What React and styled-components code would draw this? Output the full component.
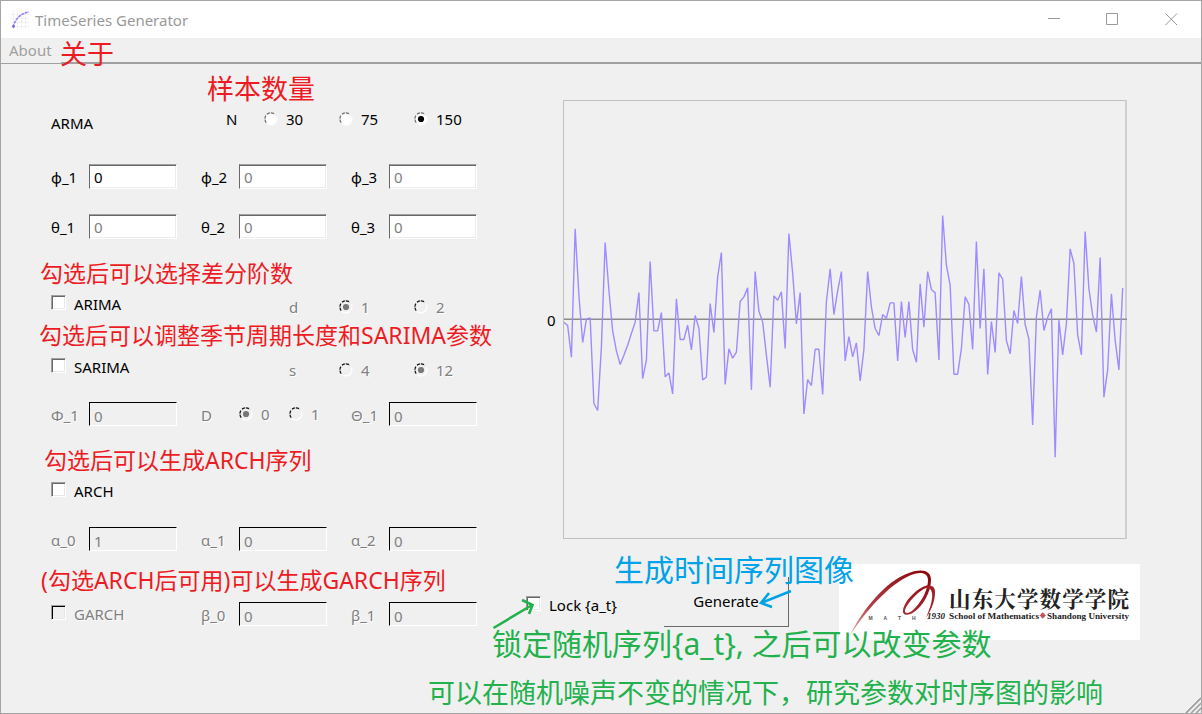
import React from "react";
import styled, { createGlobalStyle, css } from "styled-components";

const Global = createGlobalStyle`
  * { box-sizing: border-box; }
  body { margin: 0; overflow: hidden; background: #f0f0f0; }
`;

const uiFont = `"Noto Sans", "Open Sans", "Noto Sans CJK SC", sans-serif`;
const noteFont = `"Noto Sans", "Noto Sans CJK SC", sans-serif`;

const Window = styled.div`
  position: relative;
  width: 1202px;
  height: 714px;
  display: flex;
  flex-direction: column;
  overflow: hidden;
  border: 1px solid #a5a5a5;
  background: #f0f0f0;
  font: 15px/20px ${uiFont};
  color: #000;
`;

const TitleBar = styled.header`
  flex: none;
  height: 37px;
  display: flex;
  align-items: center;
  padding-left: 9px;
  background: #fff;
  color: #999;
`;

const AppIcon = styled.svg`
  width: 20px;
  height: 20px;
  margin-right: 5px;
`;

const Title = styled.span`
  flex: 1;
  letter-spacing: ${(p) => p.$ls || 0}px;
`;

const Controls = styled.svg`
  width: 155px;
  height: 37px;
`;

const MenuBar = styled.nav`
  flex: none;
  height: 26px;
  display: flex;
  border-bottom: 1px solid #a0a0a0;
`;

const MenuItem = styled.span`
  width: 60px;
  padding: 2px 0 0 8px;
  color: #a0a0a0;
`;

const MenuRest = styled.div`
  flex: 1;
  border-bottom: 1px solid #a0a0a0;
`;

const Body = styled.main`
  flex: 1;
  display: flex;
`;

const Params = styled.section`
  width: 525px;
  padding: 43px 0 0 50px;
`;

const Row = styled.div`
  display: flex;
  height: 25px;
  margin-top: ${(p) => p.$gap || 0}px;
`;

const Cell = styled.div`
  flex: none;
  width: ${(p) => p.$w}px;
  padding-top: ${(p) => p.$drop || 0}px;
  padding-left: ${(p) => p.$indent || 0}px;
  line-height: 25px;
  height: 25px;
  white-space: nowrap;
  ${(p) => p.$off && css`color: #808080; text-shadow: 1px 1px 0 #fff;`}
`;

const FieldBox = styled.label`
  flex: none;
  width: 150px;
  display: flex;
`;

const FieldLabel = styled.span`
  width: 38px;
  padding-top: 1px;
  line-height: 25px;
  white-space: nowrap;
  ${(p) => p.$off && css`color: #808080; text-shadow: 1px 1px 0 #fff;`}
`;

const Input = styled.span`
  width: 88px;
  height: 25px;
  padding-left: 4px;
  line-height: 24px;
  color: ${(p) => (p.$dim ? "#808080" : "#000")};
  background: #fff;
  border: 1px solid #fff;
  border-top-color: #a0a0a0;
  border-left-color: #696969;
  box-shadow: inset 0 1px 0 #696969, inset -1px -1px 0 #ececec;
  ${(p) => p.$off && css`
    height: 24px;
    background: #f0f0f0;
    border-top-color: #000;
    border-left-color: #000;
    box-shadow: none;
    color: #808080;
    padding-top: 1px;
  `}
`;

const RadioBox = styled.label`
  flex: none;
  display: flex;
  width: ${(p) => p.$w}px;
  padding-top: ${(p) => p.$drop || 0}px;
  height: 25px;
  line-height: 25px;
  ${(p) => p.$off && css`color: #808080; text-shadow: 1px 1px 0 #fff;`}
`;

const RadioDot = styled.svg`
  flex: none;
  width: 14px;
  height: 14px;
  margin: 5px 8px 0 1px;
`;

const CheckBoxRow = styled.label`
  flex: none;
  display: flex;
  width: ${(p) => p.$w}px;
  height: 25px;
  line-height: 24px;
  white-space: nowrap;
  ${(p) => p.$off && css`color: #808080; text-shadow: 1px 1px 0 #fff;`}
`;

const Tick = styled.span`
  flex: none;
  width: 15px;
  height: 15px;
  margin: 3px 8px 0 0;
  background: ${(p) => (p.$off ? "#f0f0f0" : "#fff")};
  border: 1px solid #fff;
  border-top-color: #a0a0a0;
  border-left-color: #a0a0a0;
  box-shadow: inset 1px 1px 0 ${(p) => (p.$off ? "#000" : "#696969")}, inset -1px -1px 0 #e8e8e8;
`;

const Output = styled.section`
  flex: 1;
  padding-top: 36px;
`;

const ChartRow = styled.div`
  display: flex;
  align-items: center;
  height: 439px;
`;

const AxisLabel = styled.span`
  width: 37px;
  padding-left: 21px;
`;

const Plot = styled.svg`
  width: 564px;
  height: 439px;
`;

const Actions = styled.div`
  display: flex;
  margin-top: 25px;
`;

const LockSlot = styled.div`
  width: 138px;
  padding-top: 29px;
`;

const Button = styled.button`
  width: 125px;
  height: 50px;
  margin: 13px 50px 0 0;
  padding: 0 0 1px;
  border: 0 solid #696969;
  border-width: 0 1px 1px 0;
  background: #f0f0f0;
  color: #000;
  font: inherit;
`;

const Logo = styled.svg`
  width: 301px;
  height: 76px;
`;

const Note = styled.span`
  position: absolute;
  left: ${(p) => p.$x - 1}px;
  top: ${(p) => p.$y - 1}px;
  font: ${(p) => p.$weight || 400} ${(p) => p.$size}px/${(p) => p.$size}px ${noteFont};
  letter-spacing: ${(p) => p.$ls || 0}px;
  color: ${(p) => p.$color};
  white-space: nowrap;
`;

const Overlay = styled.svg`
  position: absolute;
  left: ${(p) => p.$x - 1}px;
  top: ${(p) => p.$y - 1}px;
`;

const red = "#ed1c24";
const green = "#22b14c";
const blue = "#00a2e8";

function Field({ name, value, off, dim }) {
  return (
    <FieldBox>
      <FieldLabel $off={off}>{name}</FieldLabel>
      <Input $off={off} $dim={dim}>{value}</Input>
    </FieldBox>
  );
}

function Radio({ w, label, on, off, drop }) {
  return (
    <RadioBox $w={w} $off={off} $drop={drop}>
      <RadioDot viewBox="0 0 14 14">
        <circle cx="6.8" cy="6.8" r="5.6" fill={off ? "#f0f0f0" : "#fff"} />
        <path d="M11.2 11 A6 6 0 0 1 3 11.5" fill="none" stroke="#fff" strokeWidth="1.3" />
        <path d="M12.5 4.5 A6.2 6.2 0 0 1 8 12.8" fill="none" stroke="#fff" strokeWidth="1.2" />
        <path
          d="M2.2 10.6 A6 6 0 0 1 2.2 3.2 M3 2.3 A6 6 0 0 1 10.8 2.2"
          fill="none"
          stroke={off ? "#111" : "#707070"}
          strokeWidth="1.2"
          strokeDasharray="3.2 .9"
        />
        {on && <circle cx="7" cy="7" r="3.1" fill={off ? "#777" : "#000"} />}
      </RadioDot>
      {label}
    </RadioBox>
  );
}

function Check({ w, label, off }) {
  return (
    <CheckBoxRow $w={w} $off={off}>
      <Tick $off={off} />
      {label}
    </CheckBoxRow>
  );
}

// Sample heights, in thirds of a pixel below the top of the series band.
const series = [
  366, 376, 471, 86, 285, 427, 357, 353, 610, 631, 440, 127, 270, 392, 452, 493, 465, 435, 400, 366, 277, 535, 480,
  184, 392, 392, 337, 530, 518, 581, 296, 418, 418, 375, 449, 346, 384, 539, 531, 310, 397, 230, 157, 553, 446, 474,
  456, 304, 290, 263, 569, 214, 333, 365, 465, 561, 287, 300, 275, 445, 100, 218, 371, 277, 641, 538, 556, 447, 447,
  583, 304, 206, 343, 272, 214, 482, 409, 470, 428, 542, 448, 214, 320, 385, 406, 343, 354, 308, 308, 482, 304, 412,
  304, 448, 486, 251, 381, 214, 268, 278, 479, 46, 195, 255, 522, 522, 445, 290, 312, 448, 124, 385, 206, 523, 364,
  457, 218, 237, 421, 461, 331, 370, 229, 373, 417, 674, 350, 270, 391, 352, 326, 771, 360, 464, 370, 146, 190, 404,
  464, 94, 265, 345, 396, 172, 591, 510, 281, 420, 509, 263,
];

const points = series.map((v, i) => `${(0.9 + i * 3.75).toFixed(2)},${(100.2 + v / 3).toFixed(2)}`).join(" ");

function Chart() {
  return (
    <Plot viewBox="0 0 564 439">
      <path d="M.5 439V.5H563" fill="none" stroke="#c0c0c0" />
      <path d="M0 438.5H563" stroke="#c0c0c0" />
      <path d="M563 0V439" stroke="#cfcfcf" strokeWidth="2" />
      <path d="M1 219.2H564" stroke="#8c8c8c" strokeWidth="1.4" />
      <polyline points={points} fill="none" stroke="#a08aff" strokeWidth="1.4" strokeLinejoin="bevel" />
    </Plot>
  );
}

function SchoolLogo() {
  return (
    <Logo viewBox="0 0 301 76">
      <defs>
        <linearGradient id="fade" x1="0" y1="1" x2="1" y2="0">
          <stop offset="0" stopColor="#e9bcbc" />
          <stop offset=".35" stopColor="#b04048" />
          <stop offset="1" stopColor="#8a0008" />
        </linearGradient>
      </defs>
      <rect width="301" height="76" fill="#fff" />
      <path
        d="M10 73 C22 48 46 17 70 9 C84 4 92 7 92 16 C92 28 84 42 75 48 C70 52 63 52 64 46 C66 36 78 24 89 21 L89 23 C80 26 69 38 66 46 C65 50 70 50 74 46 C82 39 89 26 89 16 C89 9 82 7 72 11 C50 20 26 48 10 73Z"
        fill="url(#fade)"
      />
      <path d="M80 26 C89 20 96 20 96 28 C96 38 92 46 87 54 C91 44 94 36 93 29 C92 23 88 23 80 26Z" fill="#a02028" />
      <g fontFamily="'Liberation Sans', sans-serif" fontWeight="700" fontSize="5" fill="#555">
        <text x="29.5" y="56">M</text>
        <text x="44.5" y="56">A</text>
        <text x="59" y="56">T</text>
        <text x="73" y="56">H</text>
      </g>
      <g fontFamily="'Liberation Serif', serif" fontWeight="700" fill="#222">
        <text x="88" y="55.3" fontSize="9" fontStyle="italic" textLength="18">1930</text>
        <text x="110" y="54.5" fontSize="9" textLength="90" lengthAdjust="spacingAndGlyphs">School of Mathematics</text>
        <text x="208" y="54.5" fontSize="9" textLength="82" lengthAdjust="spacingAndGlyphs">Shandong University</text>
      </g>
      <circle cx="203.7" cy="51.5" r="2.4" fill="#c4545a" />
      <path d="M203.7 48.5v6M200.7 51.5h6" stroke="#c4545a" />
      <text
        x="110"
        y="43"
        fontFamily="'Noto Serif CJK SC', 'Noto Sans CJK SC', serif"
        fontWeight="700"
        fontSize="21.5"
        fill="#222"
        textLength="180"
      >
        山东大学数学学院
      </text>
    </Logo>
  );
}

export default function App() {
  return (
    <>
      <Global />
      <Window>
        <TitleBar>
          <AppIcon viewBox="0 0 20 20">
            <path d="M3.5 1v18M7.5 1v18M11.5 1v18M15.5 1v18M1 4.5h18M1 8.500h18M1 12.5h18M1 16.500h18" stroke="#f1f1f1" />
            <path d="M3 17C5 11 8 4 19 2" fill="none" stroke="#8f80ff" strokeWidth="1.6" strokeDasharray="3 .8" />
            <circle cx="3.5" cy="16.500" r="1.4" fill="#7a68f0" />
          </AppIcon>
          <Title>TimeSeries Generator</Title>
          <Controls viewBox="0 0 155 37">
            <path d="M2 17.500h12M60.500 12.500h11v11h-11zM119.500 12.500l11.500 11.500M131 12.500l-11.500 11.500" fill="none" stroke="#999" />
          </Controls>
        </TitleBar>
        <MenuBar>
          <MenuItem>About</MenuItem>
          <MenuRest />
        </MenuBar>
        <Body>
          <Params>
            <Row>
              <Cell $w={175} $drop={4}>ARMA</Cell>
              <Cell $w={37}>N</Cell>
              <Radio w={75} label="30" />
              <Radio w={75} label="75" />
              <Radio w={75} label="150" on />
            </Row>
            <Row $gap={32}>
              <Field name="φ_1" value="0" />
              <Field name="φ_2" value="0" dim />
              <Field name="φ_3" value="0" dim />
            </Row>
            <Row $gap={25}>
              <Field name="θ_1" value="0" dim />
              <Field name="θ_2" value="0" dim />
              <Field name="θ_3" value="0" dim />
            </Row>
            <Row $gap={53}>
              <Check w={238} label="ARIMA" />
              <Cell $w={49} $drop={3} $off>d</Cell>
              <Radio w={75} label="1" on off drop={3} />
              <Radio w={75} label="2" off drop={3} />
            </Row>
            <Row $gap={38}>
              <Check w={238} label="SARIMA" />
              <Cell $w={49} $drop={3} $off>s</Cell>
              <Radio w={75} label="4" off drop={3} />
              <Radio w={75} label="12" on off drop={3} />
            </Row>
            <Row $gap={22}>
              <Field name="Φ_1" value="0" off />
              <Cell $w={37} $drop={1} $off>D</Cell>
              <Radio w={50} label="0" on off />
              <Radio w={63} label="1" off />
              <Field name="Θ_1" value="0" off />
            </Row>
            <Row $gap={52}>
              <Check w={150} label="ARCH" />
            </Row>
            <Row $gap={23}>
              <Field name="α_0" value="1" off />
              <Field name="α_1" value="0" off />
              <Field name="α_2" value="0" off />
            </Row>
            <Row $gap={50}>
              <Check w={150} label="GARCH" off />
              <Field name="β_0" value="0" off />
              <Field name="β_1" value="0" off />
            </Row>
          </Params>
          <Output>
            <ChartRow>
              <AxisLabel>0</AxisLabel>
              <Chart />
            </ChartRow>
            <Actions>
              <LockSlot>
                <Check w={120} label="Lock {a_t}" />
              </LockSlot>
              <Button>Generate</Button>
              <SchoolLogo />
            </Actions>
          </Output>
        </Body>

        <Overlay $x={1185} $y={697} width="16" height="16" viewBox="0 0 16 16">
          <path d="M1 16L16 1M6 16L16 6M11 16L16 11" stroke="#a0a0a0" strokeWidth="1.8" />
          <path d="M0 15L15 0M4.500 16L16 4.500M9.500 16L16 9.500" stroke="#fff" strokeWidth=".8" />
        </Overlay>

        <Note $x={60} $y={40} $size={27} $color={red}>关于</Note>
        <Note $x={207} $y={75} $size={27} $color={red}>样本数量</Note>
        <Note $x={40} $y={262} $size={23} $color={red}>勾选后可以选择差分阶数</Note>
        <Note $x={39} $y={324} $size={23} $color={red}>勾选后可以调整季节周期长度和SARIMA参数</Note>
        <Note $x={44} $y={449} $size={23} $color={red}>勾选后可以生成ARCH序列</Note>
        <Note $x={41} $y={569} $size={23} $color={red}>(勾选ARCH后可用)可以生成GARCH序列</Note>
        <Note $x={614} $y={555} $size={30} $color={blue}>生成时间序列图像</Note>
        <Note $x={492} $y={629} $size={30} $color={green}>{"锁定随机序列{a_t}, 之后可以改变参数"}</Note>
        <Note $x={428} $y={679} $size={27} $color={green}>可以在随机噪声不变的情况下，研究参数对时序图的影响</Note>

        <Overlay $x={490} $y={596} width="48" height="34" viewBox="0 0 48 34">
          <path d="M3.500 32L42 9M32 4L42.500 9L39 18" fill="none" stroke={green} strokeWidth="2.600" />
        </Overlay>
        <Overlay $x={756} $y={588} width="36" height="22" viewBox="0 0 36 22">
          <path d="M35 3L5 15M13 5L5 15L16 19" fill="none" stroke={blue} strokeWidth="2.600" />
        </Overlay>
      </Window>
    </>
  );
}
